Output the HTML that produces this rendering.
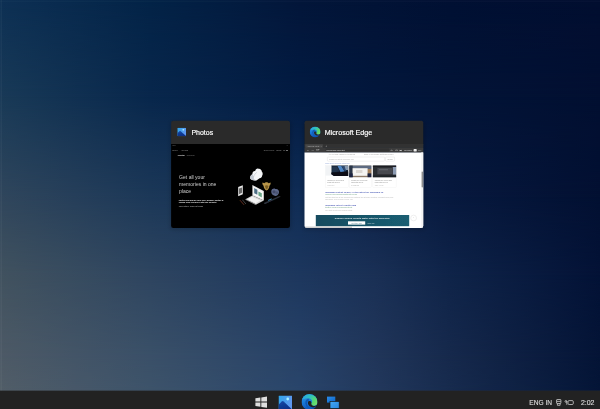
<!DOCTYPE html>
<html lang="en"><head><meta charset="utf-8"><title>Task View</title>
<style>
html,body{margin:0;padding:0;background:#0a1f44;width:600px;height:409px;overflow:hidden}
svg{display:block;position:absolute;left:0;top:0}
text{font-family:"Liberation Sans",sans-serif}
</style></head><body>
<svg width="600" height="409" viewBox="0 0 600 409">
<defs>
<linearGradient id="r0" x1="0" y1="0" x2="600" y2="0" gradientUnits="userSpaceOnUse"><stop offset="0.0000" stop-color="#0d3054"/><stop offset="0.2500" stop-color="#032347"/><stop offset="0.5000" stop-color="#03163a"/><stop offset="0.6250" stop-color="#021336"/><stop offset="0.7500" stop-color="#011033"/><stop offset="1.0000" stop-color="#020e30"/></linearGradient>
<linearGradient id="r1" x1="0" y1="0" x2="600" y2="0" gradientUnits="userSpaceOnUse"><stop offset="0.0000" stop-color="#193a57"/><stop offset="0.2500" stop-color="#08274c"/><stop offset="0.5000" stop-color="#021b42"/><stop offset="0.6250" stop-color="#02173c"/><stop offset="0.7500" stop-color="#021437"/><stop offset="1.0000" stop-color="#020f31"/></linearGradient>
<linearGradient id="r2" x1="0" y1="0" x2="600" y2="0" gradientUnits="userSpaceOnUse"><stop offset="0.0000" stop-color="#30465c"/><stop offset="0.2500" stop-color="#1c3858"/><stop offset="0.5000" stop-color="#0f2c55"/><stop offset="0.6250" stop-color="#0d2249"/><stop offset="0.7500" stop-color="#07193e"/><stop offset="1.0000" stop-color="#021032"/></linearGradient>
<linearGradient id="r3" x1="0" y1="0" x2="600" y2="0" gradientUnits="userSpaceOnUse"><stop offset="0.0000" stop-color="#41525f"/><stop offset="0.2500" stop-color="#2e4560"/><stop offset="0.5000" stop-color="#1d375e"/><stop offset="0.6250" stop-color="#1a3055"/><stop offset="0.7500" stop-color="#0f2449"/><stop offset="1.0000" stop-color="#031236"/></linearGradient>
<linearGradient id="r4" x1="0" y1="0" x2="600" y2="0" gradientUnits="userSpaceOnUse"><stop offset="0.0000" stop-color="#4d5a66"/><stop offset="0.2500" stop-color="#3a5068"/><stop offset="0.5000" stop-color="#274268"/><stop offset="0.6250" stop-color="#21365a"/><stop offset="0.7500" stop-color="#16294c"/><stop offset="1.0000" stop-color="#041436"/></linearGradient>
<linearGradient id="r5" x1="0" y1="0" x2="600" y2="0" gradientUnits="userSpaceOnUse"><stop offset="0.0000" stop-color="#515d68"/><stop offset="0.2500" stop-color="#3d536a"/><stop offset="0.5000" stop-color="#29456b"/><stop offset="0.6250" stop-color="#22385c"/><stop offset="0.7500" stop-color="#172b4e"/><stop offset="1.0000" stop-color="#041537"/></linearGradient>
<linearGradient id="v1" x1="0" y1="0" x2="0" y2="97" gradientUnits="userSpaceOnUse"><stop offset="0" stop-color="#fff" stop-opacity="0"/><stop offset="1" stop-color="#fff" stop-opacity="1"/></linearGradient>
<mask id="m1" maskUnits="userSpaceOnUse" x="0" y="0" width="600" height="409"><rect x="0" y="0" width="600" height="409" fill="url(#v1)"/></mask>
<linearGradient id="v2" x1="0" y1="97" x2="0" y2="197" gradientUnits="userSpaceOnUse"><stop offset="0" stop-color="#fff" stop-opacity="0"/><stop offset="1" stop-color="#fff" stop-opacity="1"/></linearGradient>
<mask id="m2" maskUnits="userSpaceOnUse" x="0" y="0" width="600" height="409"><rect x="0" y="97" width="600" height="312" fill="url(#v2)"/></mask>
<linearGradient id="v3" x1="0" y1="197" x2="0" y2="275" gradientUnits="userSpaceOnUse"><stop offset="0" stop-color="#fff" stop-opacity="0"/><stop offset="1" stop-color="#fff" stop-opacity="1"/></linearGradient>
<mask id="m3" maskUnits="userSpaceOnUse" x="0" y="0" width="600" height="409"><rect x="0" y="197" width="600" height="212" fill="url(#v3)"/></mask>
<linearGradient id="v4" x1="0" y1="275" x2="0" y2="357" gradientUnits="userSpaceOnUse"><stop offset="0" stop-color="#fff" stop-opacity="0"/><stop offset="1" stop-color="#fff" stop-opacity="1"/></linearGradient>
<mask id="m4" maskUnits="userSpaceOnUse" x="0" y="0" width="600" height="409"><rect x="0" y="275" width="600" height="134" fill="url(#v4)"/></mask>
<linearGradient id="v5" x1="0" y1="357" x2="0" y2="391" gradientUnits="userSpaceOnUse"><stop offset="0" stop-color="#fff" stop-opacity="0"/><stop offset="1" stop-color="#fff" stop-opacity="1"/></linearGradient>
<mask id="m5" maskUnits="userSpaceOnUse" x="0" y="0" width="600" height="409"><rect x="0" y="357" width="600" height="52" fill="url(#v5)"/></mask>
</defs>
<rect width="600" height="409" fill="url(#r0)"/>
<rect x="0" y="0" width="600" height="409" fill="url(#r1)" mask="url(#m1)"/>
<rect x="0" y="97" width="600" height="312" fill="url(#r2)" mask="url(#m2)"/>
<rect x="0" y="197" width="600" height="212" fill="url(#r3)" mask="url(#m3)"/>
<rect x="0" y="275" width="600" height="134" fill="url(#r4)" mask="url(#m4)"/>
<rect x="0" y="357" width="600" height="52" fill="url(#r5)" mask="url(#m5)"/>
<defs>
<linearGradient id="tv1" x1="0" y1="0" x2="1" y2="1"><stop offset="0" stop-color="#2a8cea"/><stop offset="1" stop-color="#0f66c8"/></linearGradient><linearGradient id="tv2" x1="0" y1="0" x2="1" y2="1"><stop offset="0" stop-color="#43a8f4"/><stop offset="1" stop-color="#2886e0"/></linearGradient>
<linearGradient id="bn" x1="0" y1="0" x2="1" y2="0"><stop offset="0" stop-color="#164b5f"/><stop offset="1" stop-color="#1a5e72"/></linearGradient>
<filter id="soft" x="0" y="0" width="600" height="409" filterUnits="userSpaceOnUse"><feGaussianBlur stdDeviation="0.45"/></filter>
<filter id="sh" x="-20%" y="-20%" width="140%" height="140%"><feGaussianBlur stdDeviation="2.2"/></filter>
<clipPath id="c1"><rect x="171.1" y="120.7" width="118.9" height="107.3" rx="2.2"/></clipPath>
<clipPath id="c2"><rect x="304.5" y="120.7" width="118.8" height="107.3" rx="2.2"/></clipPath>
<linearGradient id="sky" x1="0" y1="0" x2="1" y2="0.3"><stop offset="0" stop-color="#2ea6ea"/><stop offset="1" stop-color="#5e97ef"/></linearGradient>
<linearGradient id="mnt" x1="0" y1="0" x2="0.4" y2="1"><stop offset="0" stop-color="#164aa8"/><stop offset="1" stop-color="#0b2f86"/></linearGradient>
<symbol id="photoicon" viewBox="0 0 100 100" preserveAspectRatio="none">
 <rect width="100" height="100" rx="5" fill="url(#sky)"/>
 <path d="M0 64 L24 41 Q31 35 38 41 L100 96 L100 100 L0 100Z" fill="url(#mnt)"/>
 <circle cx="68" cy="24" r="10" fill="#a8f2ff"/>
</symbol>
<linearGradient id="eb" x1="0.2" y1="0" x2="0.5" y2="1"><stop offset="0" stop-color="#2f9fe8"/><stop offset="0.5" stop-color="#1877d6"/><stop offset="1" stop-color="#0c4fb2"/></linearGradient>
<linearGradient id="eg" x1="0" y1="0.2" x2="1" y2="0.6"><stop offset="0" stop-color="#2aa6e6"/><stop offset="0.45" stop-color="#2fc4b8"/><stop offset="0.8" stop-color="#58d870"/><stop offset="1" stop-color="#6fe070"/></linearGradient>
<symbol id="edgeicon" viewBox="0 0 100 100">
 <circle cx="50" cy="50" r="50" fill="url(#eb)"/>
 <path d="M6 30 A50 50 0 0 1 100 50 C100 66 90 74 78 74 C66 74 60 68 60 62 C60 56 66 54 66 46 C66 36 56 27 42 27 C28 27 14 34 6 30Z" fill="url(#eg)"/>
 <path d="M44 46 C52 42 62 46 62 56 C60 62 62 70 72 74 C82 78 94 72 98 64 L95 72 C90 82 76 86 64 82 C50 78 40 66 40 56 C40 52 41 48 44 46Z" fill="currentColor"/>
 <path d="M42 28 C30 32 22 44 24 58 C26 72 36 84 50 90 C36 80 32 68 34 56 C35 48 39 44 44 44 C50 38 48 30 42 28Z" fill="#0a3f9a" opacity="0.55"/>
</symbol>
</defs>
<rect x="0.6" y="0" width="1.2" height="391" fill="#fff" opacity="0.05"/><rect x="0" y="0.6" width="600" height="1.2" fill="#fff" opacity="0.03"/>
<g filter="url(#soft)">
<rect x="170" y="121" width="121.5" height="109" rx="3" fill="#000" opacity="0.16" filter="url(#sh)"/>
<g clip-path="url(#c1)">
<rect x="171" y="120" width="120" height="25" fill="#292929"/>
<rect x="171" y="144" width="120" height="85" fill="#000"/>
</g>
<use href="#photoicon" x="177.3" y="127.7" width="8.8" height="8.6"/>
<text x="191.4" y="135" font-size="7.4" fill="#fff" stroke="#fff" stroke-width="0.18" textLength="21.8" lengthAdjust="spacingAndGlyphs">Photos</text>
<g fill="#8a8a8a">
<text transform="translate(172.2 146.2) scale(0.1)" font-size="19" fill="#777" textLength="32" lengthAdjust="spacingAndGlyphs">Photos</text>
<text transform="translate(286.6 146.3) scale(0.1)" font-size="22" fill="#888">×</text>
<text transform="translate(172.2 150.9) scale(0.1)" font-size="22" fill="#9a9a9a" textLength="54" lengthAdjust="spacingAndGlyphs">Photos</text>
<text transform="translate(181.6 150.9) scale(0.1)" font-size="22" fill="#8a8a8a" textLength="66" lengthAdjust="spacingAndGlyphs">Search</text>
<text transform="translate(263.8 150.9) scale(0.1)" font-size="22" fill="#8f8f8f" textLength="104" lengthAdjust="spacingAndGlyphs">Select  Import</text>
<text transform="translate(276.4 150.9) scale(0.1)" font-size="22" fill="#a0a0a0" textLength="50" lengthAdjust="spacingAndGlyphs">New</text>
<text transform="translate(283 150.9) scale(0.1)" font-size="22" fill="#a8a8a8" textLength="52" lengthAdjust="spacingAndGlyphs">•••  ▣</text>
<text transform="translate(177.8 156.3) scale(0.1)" font-size="23" font-weight="bold" fill="#ececec" textLength="68" lengthAdjust="spacingAndGlyphs">Collection</text>
<text transform="translate(186.4 156.3) scale(0.1)" font-size="23" fill="#808080" textLength="84" lengthAdjust="spacingAndGlyphs">Albums  People</text>
</g>
<g fill="#cdcdcd" font-size="5.9">
<text x="179.1" y="178.6" textLength="25.8" lengthAdjust="spacingAndGlyphs">Get all your</text>
<text x="179.1" y="186" textLength="37.3" lengthAdjust="spacingAndGlyphs">memories in one</text>
<text x="179.1" y="193.1" textLength="12" lengthAdjust="spacingAndGlyphs">place</text>
</g>
<g fill="#f2f2f2" font-weight="bold">
<text transform="translate(178.8 200.8) scale(0.1)" font-size="25" textLength="446" lengthAdjust="spacingAndGlyphs">Photos can add all your files, albums, photos &amp;</text>
<text transform="translate(178.8 203.4) scale(0.1)" font-size="25" textLength="378" lengthAdjust="spacingAndGlyphs">videos from OneDrive into one memory</text>
<text transform="translate(178.8 207) scale(0.1)" font-size="25" fill="#9a9a9a" textLength="244" lengthAdjust="spacingAndGlyphs">collection. Sign in today</text>
</g>
<g>
 <path d="M250.2 178.6 C249.8 176.4 251.2 174.8 252.4 174.2 C252.2 172.2 253.6 170.8 255.2 171 C255.4 169.4 256.8 168.3 258.4 168.7 C260.2 168.3 261.8 169.8 261.8 171.6 C262.8 172.6 263 174.2 262.2 175.6 C262.2 177.2 260.8 178.2 259.6 178.2 L256.4 180.4 C254 180.8 251 180.2 250.2 178.6Z" fill="#f4f6f8"/>
 <path d="M250.2 178.6 C249.8 176.4 251.2 174.8 252.4 174.2 L253.6 176.4 L254 179.2 L256.4 180.4 C254 180.8 251 180.2 250.2 178.6Z" fill="#c2c9d2"/>
 <path d="M253.4 177.4 C254 175 255.4 173.4 256.8 172.4" stroke="#aab3be" stroke-width="0.5" fill="none"/>
 <path d="M238.2 187 L242.8 185.2 L242.8 194.2 L238.2 196.2Z" fill="#e8e8e8"/>
 <path d="M239 188.6 L242 187.4 L242 192.8 L239 194.2Z" fill="#6b6b6b"/>
 <path d="M252.4 185 L263.8 191 L263.8 200.6 L252.4 195.4Z" fill="#ececec"/>
 <path d="M253.4 186.8 L262.8 191.8 L262.8 199 L253.4 194.4Z" fill="#fbfbfb"/>
 <path d="M254.2 188 L257.4 189.7 L257.4 194.8 L254.2 193.2Z" fill="#4f6f86"/>
 <path d="M258.4 191.4 L261.8 193.2 L261.8 197.4 L258.4 195.6Z" fill="#6aa588"/>
 <path d="M245.4 199.2 L252.4 195.4 L263.8 200.6 L256.2 204.6Z" fill="#d6d6d6"/>
 <path d="M247.6 199.2 L252.2 196.8 L260.4 200.6 L255.6 203.2Z" fill="#f4f4f4"/>
 <path d="M245.4 199.2 L256.2 204.6 L256.2 205.2 L245.4 199.8Z" fill="#9a9a9a"/>
 <path d="M262.4 182.6 L264.4 183.2 C265.2 181.8 267.8 181.8 268.6 183.2 L270.6 182.4 C270.8 184 270.2 185.2 269.4 185.8 C269.4 187.8 268.4 189.8 266.6 190.4 C264.8 189.8 263.6 187.8 263.6 185.8 C262.8 185.2 262.2 184 262.4 182.6Z" fill="#b8954a"/>
 <path d="M265 185.8 C265.8 185 267.6 185 268.4 186 C268.2 187.8 267.4 189.2 266.6 189.6 C265.8 189.2 265.2 187.6 265 185.8Z" fill="#7a5e24"/>
 <path d="M271.4 190.6 C271.8 188.8 274 188 275.4 189 C277.4 188.4 279.4 190.2 279 192.4 C278.8 194.8 276.2 196.6 274 195.6 C271.8 195.2 270.8 192.6 271.4 190.6Z" fill="#5d688a"/>
 <circle cx="274" cy="191.8" r="1.6" fill="#404a68"/><circle cx="276.8" cy="192.8" r="1.5" fill="#4a5472"/>
 <path d="M263.6 203 L279.4 196 L280.6 196.8 L265 204.2Z" fill="#2c313c"/>
 <path d="M268.2 200.4 L271.6 198.9" stroke="#49b0e6" stroke-width="0.8"/>
 <path d="M240 200.2 L244 204.8" stroke="#a8523a" stroke-width="0.6"/>
 <path d="M242.4 199.8 L246 204" stroke="#707070" stroke-width="0.6"/>
</g>
<rect x="303" y="121" width="122" height="109" rx="3" fill="#000" opacity="0.16" filter="url(#sh)"/>
<g clip-path="url(#c2)">
<rect x="304" y="120" width="120" height="25" fill="#292929"/>
<rect x="304" y="143.9" width="120" height="4" fill="#333333"/>
<rect x="305.3" y="144.2" width="17.6" height="3.7" rx="0.6" fill="#464646"/>
<rect x="304" y="147.8" width="120" height="4.8" fill="#3b3b3b"/>
<rect x="325.6" y="148.6" width="63.6" height="3" rx="0.6" fill="#333333"/>
<rect x="304" y="152.5" width="120" height="76" fill="#fff"/>
<text transform="translate(307.4 146.8) scale(0.1)" font-size="22" fill="#b5b5b5" textLength="118" lengthAdjust="spacingAndGlyphs">Windows Latest</text>
<text transform="translate(320.4 147.1) scale(0.1)" font-size="24" fill="#a5a5a5">×</text>
<text transform="translate(325.6 147.2) scale(0.1)" font-size="26" fill="#b0b0b0">+</text>
<text transform="translate(306 151.1) scale(0.1)" font-size="26" fill="#b8b8b8" textLength="140" lengthAdjust="spacingAndGlyphs">←  →  ⟳</text>
<text transform="translate(326.6 150.9) scale(0.1)" font-size="22" fill="#e0e0e0" textLength="180" lengthAdjust="spacingAndGlyphs">bing.com/search?q=windows+latest</text>
<text transform="translate(390 151) scale(0.1)" font-size="24" fill="#c0c0c0" textLength="315" lengthAdjust="spacingAndGlyphs">☆  ⚙  ▣  Sign in      ⋯</text>
<rect x="413.7" y="148.9" width="2.9" height="2.6" rx="0.5" fill="#ececec"/>
<text transform="translate(328.4 155.3) scale(0.1)" font-size="21" fill="#a8a8a8" textLength="266" lengthAdjust="spacingAndGlyphs">ALL  IMAGES  VIDEOS  MAPS  NEWS</text>
<text transform="translate(364 155.3) scale(0.1)" font-size="21" fill="#a8a8a8" textLength="294" lengthAdjust="spacingAndGlyphs">Sign in  Rewards  Settings  Menu</text>
<rect x="327.4" y="157" width="57.2" height="4.2" rx="0.6" fill="#fff" stroke="#dcdcdc" stroke-width="0.4"/>
<text transform="translate(329 159.9) scale(0.1)" font-size="21" fill="#b4b4b4" textLength="250" lengthAdjust="spacingAndGlyphs">windows latest windows 10x</text>
<rect x="385.6" y="157" width="9" height="4.2" rx="0.6" fill="#fff" stroke="#dcdcdc" stroke-width="0.4"/>
<text transform="translate(387.4 159.9) scale(0.1)" font-size="21" fill="#a0a0a0" textLength="54" lengthAdjust="spacingAndGlyphs">Search</text>
<text transform="translate(325.2 164) scale(0.1)" font-size="21" fill="#8fa3d6" textLength="248" lengthAdjust="spacingAndGlyphs">News about Windows Latest 10X</text>
<rect x="325.4" y="165.6" width="22.8" height="21.8" fill="#fff" stroke="#ececec" stroke-width="0.3"/>
<rect x="349.3" y="165.6" width="22.2" height="21.8" fill="#fff" stroke="#ececec" stroke-width="0.3"/>
<rect x="372.9" y="165.6" width="23.2" height="21.8" fill="#fff" stroke="#ececec" stroke-width="0.3"/>
<path d="M331.3 165.6 H348.2 V175.9 H334 L331.3 174.2Z" fill="#15202f"/>
<rect x="325.4" y="165.6" width="5.9" height="10" fill="#f1f3f5"/>
<path d="M337.4 165.8 L341.2 165.8 L344.6 171.6 L340.6 172.2Z" fill="#4f86c4"/>
<path d="M332.2 166.4 H337 L339.6 171.6 L332.2 172.4Z" fill="#22344e"/>
<rect x="344.4" y="165.8" width="3.8" height="4.2" fill="#8497ae"/>
<path d="M341.6 166 L344.2 166 L346.4 171 L344.8 171.4Z" fill="#2d4a72"/>
<path d="M331.3 172.6 L348.2 171.6 V175.9 H334 L331.3 174.2Z" fill="#0b1019"/>
<rect x="349.3" y="165.6" width="22" height="11.6" fill="#8e7b6a"/>
<rect x="349.3" y="165.6" width="22" height="3.4" fill="#5d6b80"/>
<rect x="349.3" y="165.6" width="3.4" height="11.6" fill="#2b3546"/>
<rect x="367.6" y="169" width="3.7" height="4.6" fill="#a5815c"/>
<rect x="352.6" y="168.2" width="15" height="7.6" fill="#f5f4f2"/>
<rect x="356" y="170" width="6.4" height="3" fill="#dcd8d4"/>
<rect x="349.3" y="173.4" width="3.4" height="3.8" fill="#1a2440"/><rect x="367.6" y="173.4" width="3.7" height="3.8" fill="#1a2440"/>
<rect x="372.9" y="165.6" width="23.2" height="11.6" fill="#2c2e33"/>
<rect x="377.4" y="168" width="14.6" height="6.2" fill="#464950"/>
<rect x="379" y="169.4" width="9" height="0.8" fill="#6a6d74"/>
<rect x="392.8" y="165.6" width="3.3" height="9" fill="#8c9bb2"/>
<rect x="372.9" y="165.6" width="23.2" height="1.4" fill="#1b1d21"/>
<rect x="372.9" y="175.4" width="23.2" height="1.8" fill="#1f2126"/>
<text transform="translate(327.2 180.6) scale(0.1)" font-size="21" fill="#8a8a8a" textLength="168" lengthAdjust="spacingAndGlyphs">Windows 10X preview build</text>
<text transform="translate(327.2 182.7) scale(0.1)" font-size="21" fill="#8a8a8a" textLength="128" lengthAdjust="spacingAndGlyphs">leaks with new UI</text>
<text transform="translate(327.2 185.6) scale(0.1)" font-size="19" fill="#bdbdbd" textLength="70" lengthAdjust="spacingAndGlyphs">Windows Latest</text>
<text transform="translate(351.1 180.6) scale(0.1)" font-size="21" fill="#8a8a8a" textLength="162" lengthAdjust="spacingAndGlyphs">Windows 10X preview build</text>
<text transform="translate(351.1 182.7) scale(0.1)" font-size="21" fill="#8a8a8a" textLength="122" lengthAdjust="spacingAndGlyphs">leaks with new UI</text>
<text transform="translate(351.1 185.6) scale(0.1)" font-size="19" fill="#bdbdbd" textLength="80" lengthAdjust="spacingAndGlyphs">MSN</text>
<text transform="translate(374.7 180.6) scale(0.1)" font-size="21" fill="#8a8a8a" textLength="172" lengthAdjust="spacingAndGlyphs">Windows 10X preview build</text>
<text transform="translate(374.7 182.7) scale(0.1)" font-size="21" fill="#8a8a8a" textLength="132" lengthAdjust="spacingAndGlyphs">leaks with new UI</text>
<text transform="translate(374.7 185.6) scale(0.1)" font-size="19" fill="#bdbdbd" textLength="90" lengthAdjust="spacingAndGlyphs">The Verge</text>
<text transform="translate(325.2 192.7) scale(0.1)" font-size="25" font-weight="bold" fill="#5060b8" textLength="580" lengthAdjust="spacingAndGlyphs">Windows Latest News | All the latest on Windows 10</text>
<text transform="translate(325.2 195.2) scale(0.1)" font-size="21" fill="#7fae90" textLength="320" lengthAdjust="spacingAndGlyphs">www.windowslatest.com</text>
<text transform="translate(325.2 197.5) scale(0.1)" font-size="21" fill="#b4b4b4" textLength="680" lengthAdjust="spacingAndGlyphs">Get the latest on all the Windows 10 features, tips &amp; tricks, updates, Microsoft news, and</text>
<text transform="translate(325.2 199.6) scale(0.1)" font-size="21" fill="#bcbcbc" textLength="280" lengthAdjust="spacingAndGlyphs">Surface coverage from us.</text>
<text transform="translate(325.2 205.8) scale(0.1)" font-size="25" font-weight="bold" fill="#5060b8" textLength="310" lengthAdjust="spacingAndGlyphs">Windows Latest | Twitter and</text>
<text transform="translate(325.2 208) scale(0.1)" font-size="21" fill="#7fae90" textLength="270" lengthAdjust="spacingAndGlyphs">twitter.com/WindowsLatest</text>
<text transform="translate(325.2 210.6) scale(0.1)" font-size="21" fill="#b8b8b8" textLength="270" lengthAdjust="spacingAndGlyphs">The latest Tweets from Windows Latest</text>
<rect x="315.8" y="215" width="93.4" height="11.2" fill="url(#bn)"/>
<text transform="translate(334.8 219.1) scale(0.1)" font-size="23" font-weight="bold" fill="#dfe9ec" textLength="546" lengthAdjust="spacingAndGlyphs">Explore search results faster with the Bing app</text>
<rect x="348" y="221.3" width="17.2" height="3.3" fill="#fff"/>
<text transform="translate(351.2 223.8) scale(0.1)" font-size="21" fill="#5b8a98" textLength="108" lengthAdjust="spacingAndGlyphs">Get the app</text>
<text transform="translate(367.5 223.8) scale(0.1)" font-size="21" fill="#d0dfe3" textLength="68" lengthAdjust="spacingAndGlyphs">More info</text>
<circle cx="413.6" cy="218" r="2.9" fill="#fff" stroke="#dedede" stroke-width="0.5"/>
<text transform="translate(412.9 219) scale(0.1)" font-size="24" fill="#8a8a8a">^</text>
<rect x="421.2" y="152.4" width="2.2" height="76" fill="#f4f4f4"/>
<rect x="421.6" y="171.4" width="1.4" height="16" rx="0.7" fill="#8f8f8f"/>
<rect x="304" y="226.7" width="48" height="1" fill="#9a9a9a" opacity="0.7"/>
</g>
<use href="#edgeicon" x="309.7" y="126.6" width="10.8" height="10.8" color="#292929"/>
<text x="324.7" y="135.1" font-size="7.5" fill="#fff" stroke="#fff" stroke-width="0.18" textLength="47.6" lengthAdjust="spacingAndGlyphs">Microsoft Edge</text>
<rect x="0" y="390.6" width="600" height="19" fill="#212121"/>
<g fill="#dedede"><path d="M255.4 398.2 L260.4 397.5 L260.4 401.6 L255.4 401.6Z"/><path d="M261.3 397.4 L267 396.6 L267 401.6 L261.3 401.6Z"/><path d="M255.4 402.5 L260.4 402.5 L260.4 406.7 L255.4 406Z"/><path d="M261.3 402.5 L267 402.5 L267 407.7 L261.3 406.9Z"/></g>
<use href="#photoicon" x="278.5" y="395.5" width="13.6" height="14.5"/>
<use href="#edgeicon" x="301.5" y="394" width="16" height="16" color="#212121"/>
<rect x="327" y="396.6" width="8.3" height="6" fill="url(#tv1)"/>
<rect x="330" y="401.5" width="9.2" height="7" fill="url(#tv2)" stroke="#1c1c1c" stroke-width="0.7"/>
<text x="529.3" y="404.8" font-size="7.6" fill="#dcdcdc" stroke="#dcdcdc" stroke-width="0.15" textLength="22.7" lengthAdjust="spacingAndGlyphs">ENG IN</text>
<g fill="none" stroke="#d8d8d8" stroke-width="0.75"><rect x="556.6" y="399.5" width="4.3" height="4" rx="0.5"/><path d="M557.4 403.6 L557.4 405.3 L560.1 405.3 L560.1 403.6 M556.8 401.4 L560.7 401.4"/></g>
<g fill="none" stroke="#d8d8d8" stroke-width="0.75"><circle cx="565.9" cy="401.4" r="0.9"/><path d="M566.8 401.2 L566.8 404.8"/><rect x="568" y="400.6" width="5.3" height="3.9" rx="1.1"/></g>
<text x="580.9" y="404.8" font-size="7.6" fill="#dcdcdc" stroke="#dcdcdc" stroke-width="0.15" textLength="13.6" lengthAdjust="spacingAndGlyphs">2:02</text>
</g>
</svg></body></html>
